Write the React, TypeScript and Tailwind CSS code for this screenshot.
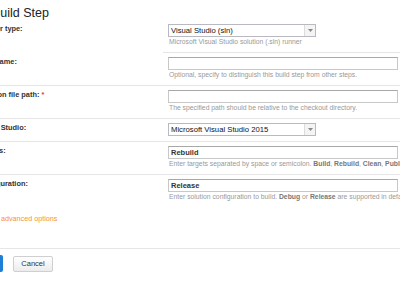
import React from "react";

const font = { fontFamily: '"Liberation Sans", Arial, sans-serif' };

function Select({ value }: { value: string }) {
  return (
    <div className="flex h-[13px] w-[148px] items-stretch border border-[#b9b9c4] bg-white">
      <div className="flex-1 pl-[2px] text-[7.7px] leading-[11px] text-[#111]">{value}</div>
      <div className="flex w-[11px] items-center justify-center border-l border-[#dcdcdc] bg-[#f4f4f4]">
        <svg width="5" height="3" viewBox="0 0 5 3">
          <path d="M0 0 L5 0 L2.5 3 Z" fill="#888" />
        </svg>
      </div>
    </div>
  );
}

function Input({ value }: { value?: string }) {
  return (
    <div className="h-[13px] w-[230px] border border-[#c8c8c8] border-t-[#a8a8a8] bg-white pl-[2px] text-[7.5px] font-bold leading-[11px] text-[#333]">
      {value}
    </div>
  );
}

function Help({ children }: { children: React.ReactNode }) {
  return (
    <div className="whitespace-nowrap pl-[1px] text-[6.8px] leading-[10px] text-[#999]">{children}</div>
  );
}

function B({ children }: { children: React.ReactNode }) {
  return <b className="text-[#777]">{children}</b>;
}

function Row({
  label,
  required,
  children,
  first,
  last,
}: {
  label: string;
  required?: boolean;
  children: React.ReactNode;
  first?: boolean;
  last?: boolean;
}) {
  return (
    <div className="flex items-stretch">
      <div
        className={`w-[186px] shrink-0 pt-[4px] text-[7.4px] font-bold leading-[10px] text-[#333] ${
          first || last ? "" : "border-b border-[#e6e6e6]"
        }`}
      >
        {label}
        {required && <span className="text-[#e33]"> *</span>}
      </div>
      <div
        className={`flex-1 pb-[5px] pl-[5px] pt-[4px] ${last ? "" : "border-b border-[#e6e6e6]"}`}
      >
        {children}
      </div>
    </div>
  );
}

export default function App() {
  return (
    <div className="h-[284px] w-[400px] overflow-hidden bg-white" style={font}>
      <div className="-ml-[23px] w-[500px]">
        <div className="ml-[15px] pt-[6px] text-[12.5px] leading-[14px] text-[#222]">Build Step</div>
        <div>
          <Row label="Runner type:" first>
            <Select value="Visual Studio (sln)" />
            <Help>Microsoft Visual Studio solution (.sln) runner</Help>
          </Row>
          <Row label="Step name:">
            <Input />
            <Help>Optional, specify to distinguish this build step from other steps.</Help>
          </Row>
          <Row label="Solution file path:" required>
            <Input />
            <Help>The specified path should be relative to the checkout directory.</Help>
          </Row>
          <Row label="Visual Studio:">
            <Select value="Microsoft Visual Studio 2015" />
          </Row>
          <Row label="Targets:">
            <Input value="Rebuild" />
            <Help>
              Enter targets separated by space or semicolon. <B>Build</B>, <B>Rebuild</B>, <B>Clean</B>,{" "}
              <B>Publish</B> or a custom target.
            </Help>
          </Row>
          <Row label="Configuration:" last>
            <Input value="Release" />
            <Help>
              Enter solution configuration to build. <B>Debug</B> or <B>Release</B> are supported in default
              projects.
            </Help>
          </Row>
        </div>
        <div className="ml-[4px] mt-[7px] text-[7.2px] leading-[10px] text-[#f7923a]">Show advanced options</div>
        <div className="mt-[24px] border-b border-[#e6e6e6]" />
        <div className="flex items-center gap-[10px] pt-[6px]">
          <div className="h-[17px] w-[26px] rounded-[2px] bg-[#1f7fd6]" />
          <div className="flex h-[16px] w-[40px] items-center justify-center rounded-[2px] border border-[#cfcfcf] bg-gradient-to-b from-white to-[#ececec] text-[7.5px] text-[#333]">
            Cancel
          </div>
        </div>
      </div>
    </div>
  );
}
